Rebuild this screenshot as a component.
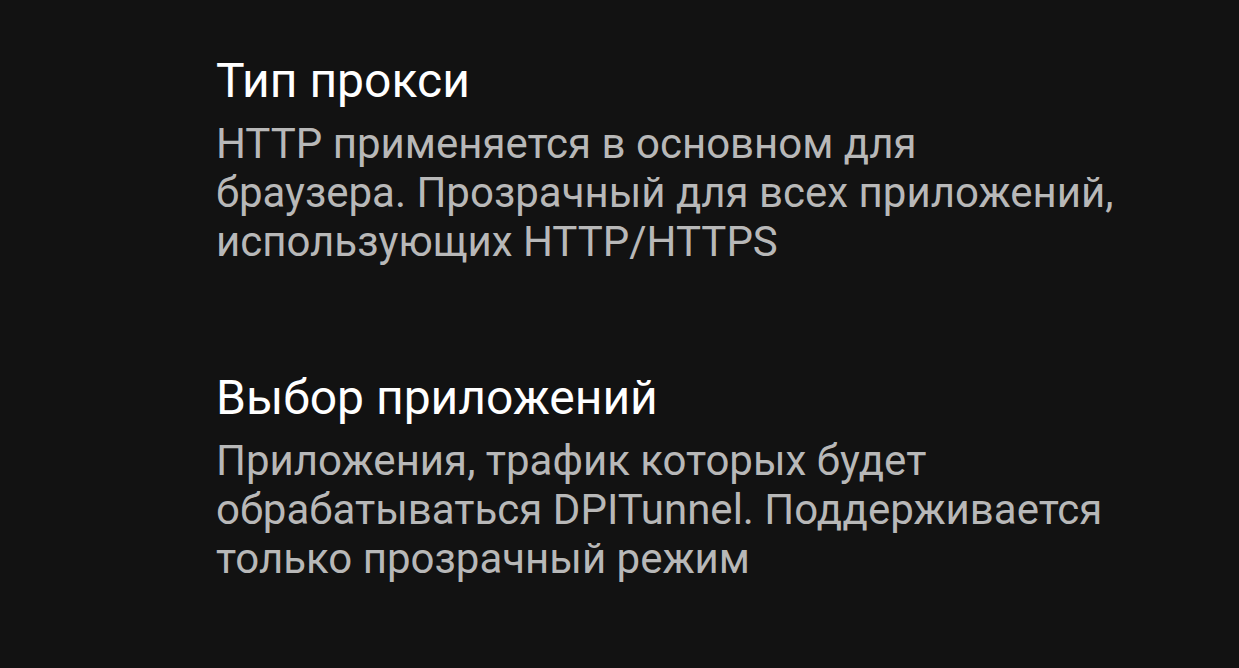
import React from "react";

const items = [
  {
    title: "Тип прокси",
    lines: [
      "HTTP применяется в основном для",
      "браузера. Прозрачный для всех приложений,",
      "использующих HTTP/HTTPS",
    ],
  },
  {
    title: "Выбор приложений",
    lines: [
      "Приложения, трафик которых будет",
      "обрабатываться DPITunnel. Поддерживается",
      "только прозрачный режим",
    ],
  },
];

const PrefItem = ({ title, lines }) => {
  return (
    <div className="py-[52px]">
      <div className="text-[48px] leading-[56px] text-white">{title}</div>
      <div className="mt-[10px] text-[42px] leading-[49px] text-[#b8b8b8]">
        {lines.map((line) => (
          <div key={line}>{line}</div>
        ))}
      </div>
    </div>
  );
};

export default function App() {
  return (
    <div
      className="w-[1239px] h-[668px] overflow-hidden bg-[#121212] pl-[216px] pt-[1px]"
      style={{ fontFamily: "Roboto, sans-serif" }}
    >
      {items.map((item) => (
        <PrefItem key={item.title} title={item.title} lines={item.lines} />
      ))}
    </div>
  );
}
